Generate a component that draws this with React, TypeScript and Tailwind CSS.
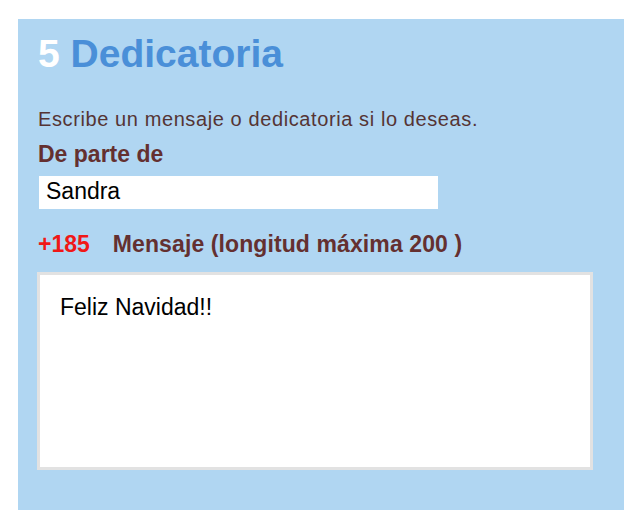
import React from "react";

export default function App() {
  const font = { fontFamily: '"Liberation Sans", Arial, Helvetica, sans-serif' };
  return (
    <div className="w-[640px] h-[526px] bg-white pt-[19px] pl-[18px]" style={font}>
      <div className="w-[606px] h-[491px] bg-[#b0d6f2] pt-[15px] pl-[20px]">
        <h1 className="text-[39px] leading-[39px] font-bold text-[#4a8fd8] whitespace-nowrap">
          <span className="text-white">5</span> Dedicatoria
        </h1>
        <p className="mt-[34px] text-[20px] leading-[24px] tracking-[0.6px] text-[#553434] whitespace-nowrap">
          Escribe un mensaje o dedicatoria si lo deseas.
        </p>
        <div className="mt-[10px] text-[23px] leading-[26px] font-bold text-[#643030]">De parte de</div>
        <input
          readOnly
          value="Sandra"
          className="mt-[9px] ml-[1px] block w-[399px] h-[33px] bg-white px-[7px] pb-[3px] text-[23px] text-black outline-none"
          style={font}
        />
        <div className="mt-[22px] flex items-center text-[23px] leading-[26px] font-bold whitespace-nowrap">
          <span className="text-[#f01818] mr-[23px]">+185</span>
          <span className="text-[#643030] tracking-[0.1px]">Mensaje (longitud máxima 200 )</span>
        </div>
        <textarea
          readOnly
          defaultValue="Feliz Navidad!!"
          className="mt-[15px] -ml-[1px] block w-[556px] h-[198px] resize-none bg-white border-[3px] border-[#e2e2e2] pt-[19px] pl-[20px] text-[23px] leading-[26px] text-black outline-none"
          style={font}
        />
      </div>
    </div>
  );
}
